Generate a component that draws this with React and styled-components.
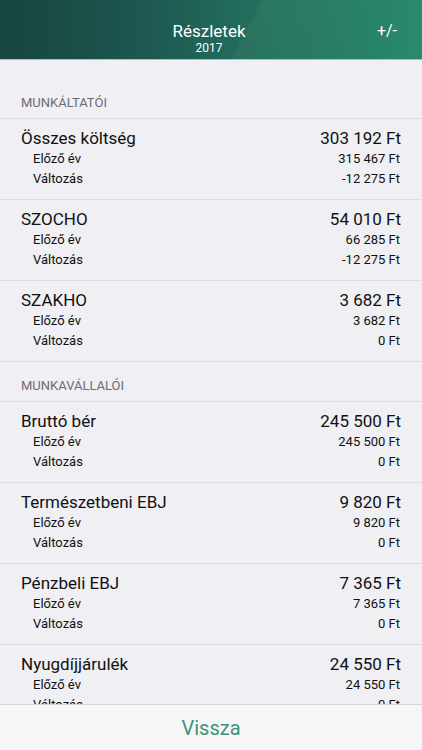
import React from 'react';
import styled, { createGlobalStyle } from 'styled-components';

const GlobalStyle = createGlobalStyle`
  html, body {
    margin: 0;
    padding: 0;
    background: #efeff4;
  }
  body {
    font-family: Roboto, "Liberation Sans", sans-serif;
    -webkit-font-smoothing: antialiased;
  }
`;

const Screen = styled.div`
  width: 422px;
  height: 750px;
  display: flex;
  flex-direction: column;
  overflow: hidden;
  background: #efeff4;
`;

const Header = styled.header`
  height: 60px;
  box-sizing: border-box;
  flex-shrink: 0;
  display: grid;
  grid-template-columns: 1fr auto 1fr;
  align-items: center;
  padding: 17px 25px 0 21px;
  color: #fff;
  background:
    linear-gradient(118deg, rgba(255, 255, 255, 0) 58%, rgba(255, 255, 255, 0.035) 58%, rgba(255, 255, 255, 0) 85%),
    linear-gradient(90deg, #18453f 0%, #1d5851 35%, #24735f 65%, #2b896f 100%);
  border-bottom: 1px solid #a7bdb7;
`;

const TitleBlock = styled.div`
  grid-column: 2;
  display: flex;
  flex-direction: column;
  align-items: center;
`;

const Title = styled.div`
  font-size: 17px;
  line-height: 20px;
`;

const Subtitle = styled.div`
  font-size: 12px;
  line-height: 14px;
`;

const Action = styled.div`
  grid-column: 3;
  justify-self: end;
  align-self: start;
  margin-top: 4px;
  font-size: 16px;
  line-height: 20px;
`;

const Content = styled.div`
  flex: 1;
  overflow: hidden;
`;

const SectionHeader = styled.div`
  padding: ${p => (p.$first ? '35px' : '16px')} 21px 7px;
  font-size: 13px;
  line-height: 16px;
  color: #6d6d72;
  border-bottom: 1px solid #dcdce0;
`;

const Group = styled.div`
  height: 81px;
  box-sizing: border-box;
  padding: 8px 21px 0;
  border-bottom: 1px solid #dcdce0;
`;

const MainRow = styled.div`
  display: flex;
  justify-content: space-between;
  font-size: 17px;
  line-height: 22px;
  color: #111;
`;

const SubRow = styled.div`
  display: flex;
  justify-content: space-between;
  font-size: 13px;
  line-height: 20px;
  color: #111;
  padding-left: 12px;
  padding-right: 1px;
`;

const Footer = styled.footer`
  height: 45px;
  flex-shrink: 0;
  display: flex;
  align-items: center;
  justify-content: center;
  background: #f6f6f7;
  border-top: 1px solid #d6d6da;
  color: #3a9479;
  font-size: 20px;
`;

const sections = [
  {
    title: 'MUNKÁLTATÓI',
    items: [
      { name: 'Összes költség', value: '303 192 Ft', prev: '315 467 Ft', diff: '-12 275 Ft' },
      { name: 'SZOCHO', value: '54 010 Ft', prev: '66 285 Ft', diff: '-12 275 Ft' },
      { name: 'SZAKHO', value: '3 682 Ft', prev: '3 682 Ft', diff: '0 Ft' },
    ],
  },
  {
    title: 'MUNKAVÁLLALÓI',
    items: [
      { name: 'Bruttó bér', value: '245 500 Ft', prev: '245 500 Ft', diff: '0 Ft' },
      { name: 'Természetbeni EBJ', value: '9 820 Ft', prev: '9 820 Ft', diff: '0 Ft' },
      { name: 'Pénzbeli EBJ', value: '7 365 Ft', prev: '7 365 Ft', diff: '0 Ft' },
      { name: 'Nyugdíjjárulék', value: '24 550 Ft', prev: '24 550 Ft', diff: '0 Ft' },
    ],
  },
];

const App = () => {
  return (
    <Screen>
      <GlobalStyle />
      <Header>
        <TitleBlock>
          <Title>Részletek</Title>
          <Subtitle>2017</Subtitle>
        </TitleBlock>
        <Action>+/-</Action>
      </Header>
      <Content>
        {sections.map((section, i) => (
          <div key={section.title}>
            <SectionHeader $first={i === 0}>{section.title}</SectionHeader>
            {section.items.map(item => (
              <Group key={item.name}>
                <MainRow>
                  <span>{item.name}</span>
                  <span>{item.value}</span>
                </MainRow>
                <SubRow>
                  <span>Előző év</span>
                  <span>{item.prev}</span>
                </SubRow>
                <SubRow>
                  <span>Változás</span>
                  <span>{item.diff}</span>
                </SubRow>
              </Group>
            ))}
          </div>
        ))}
      </Content>
      <Footer>Vissza</Footer>
    </Screen>
  );
};

export default App;
